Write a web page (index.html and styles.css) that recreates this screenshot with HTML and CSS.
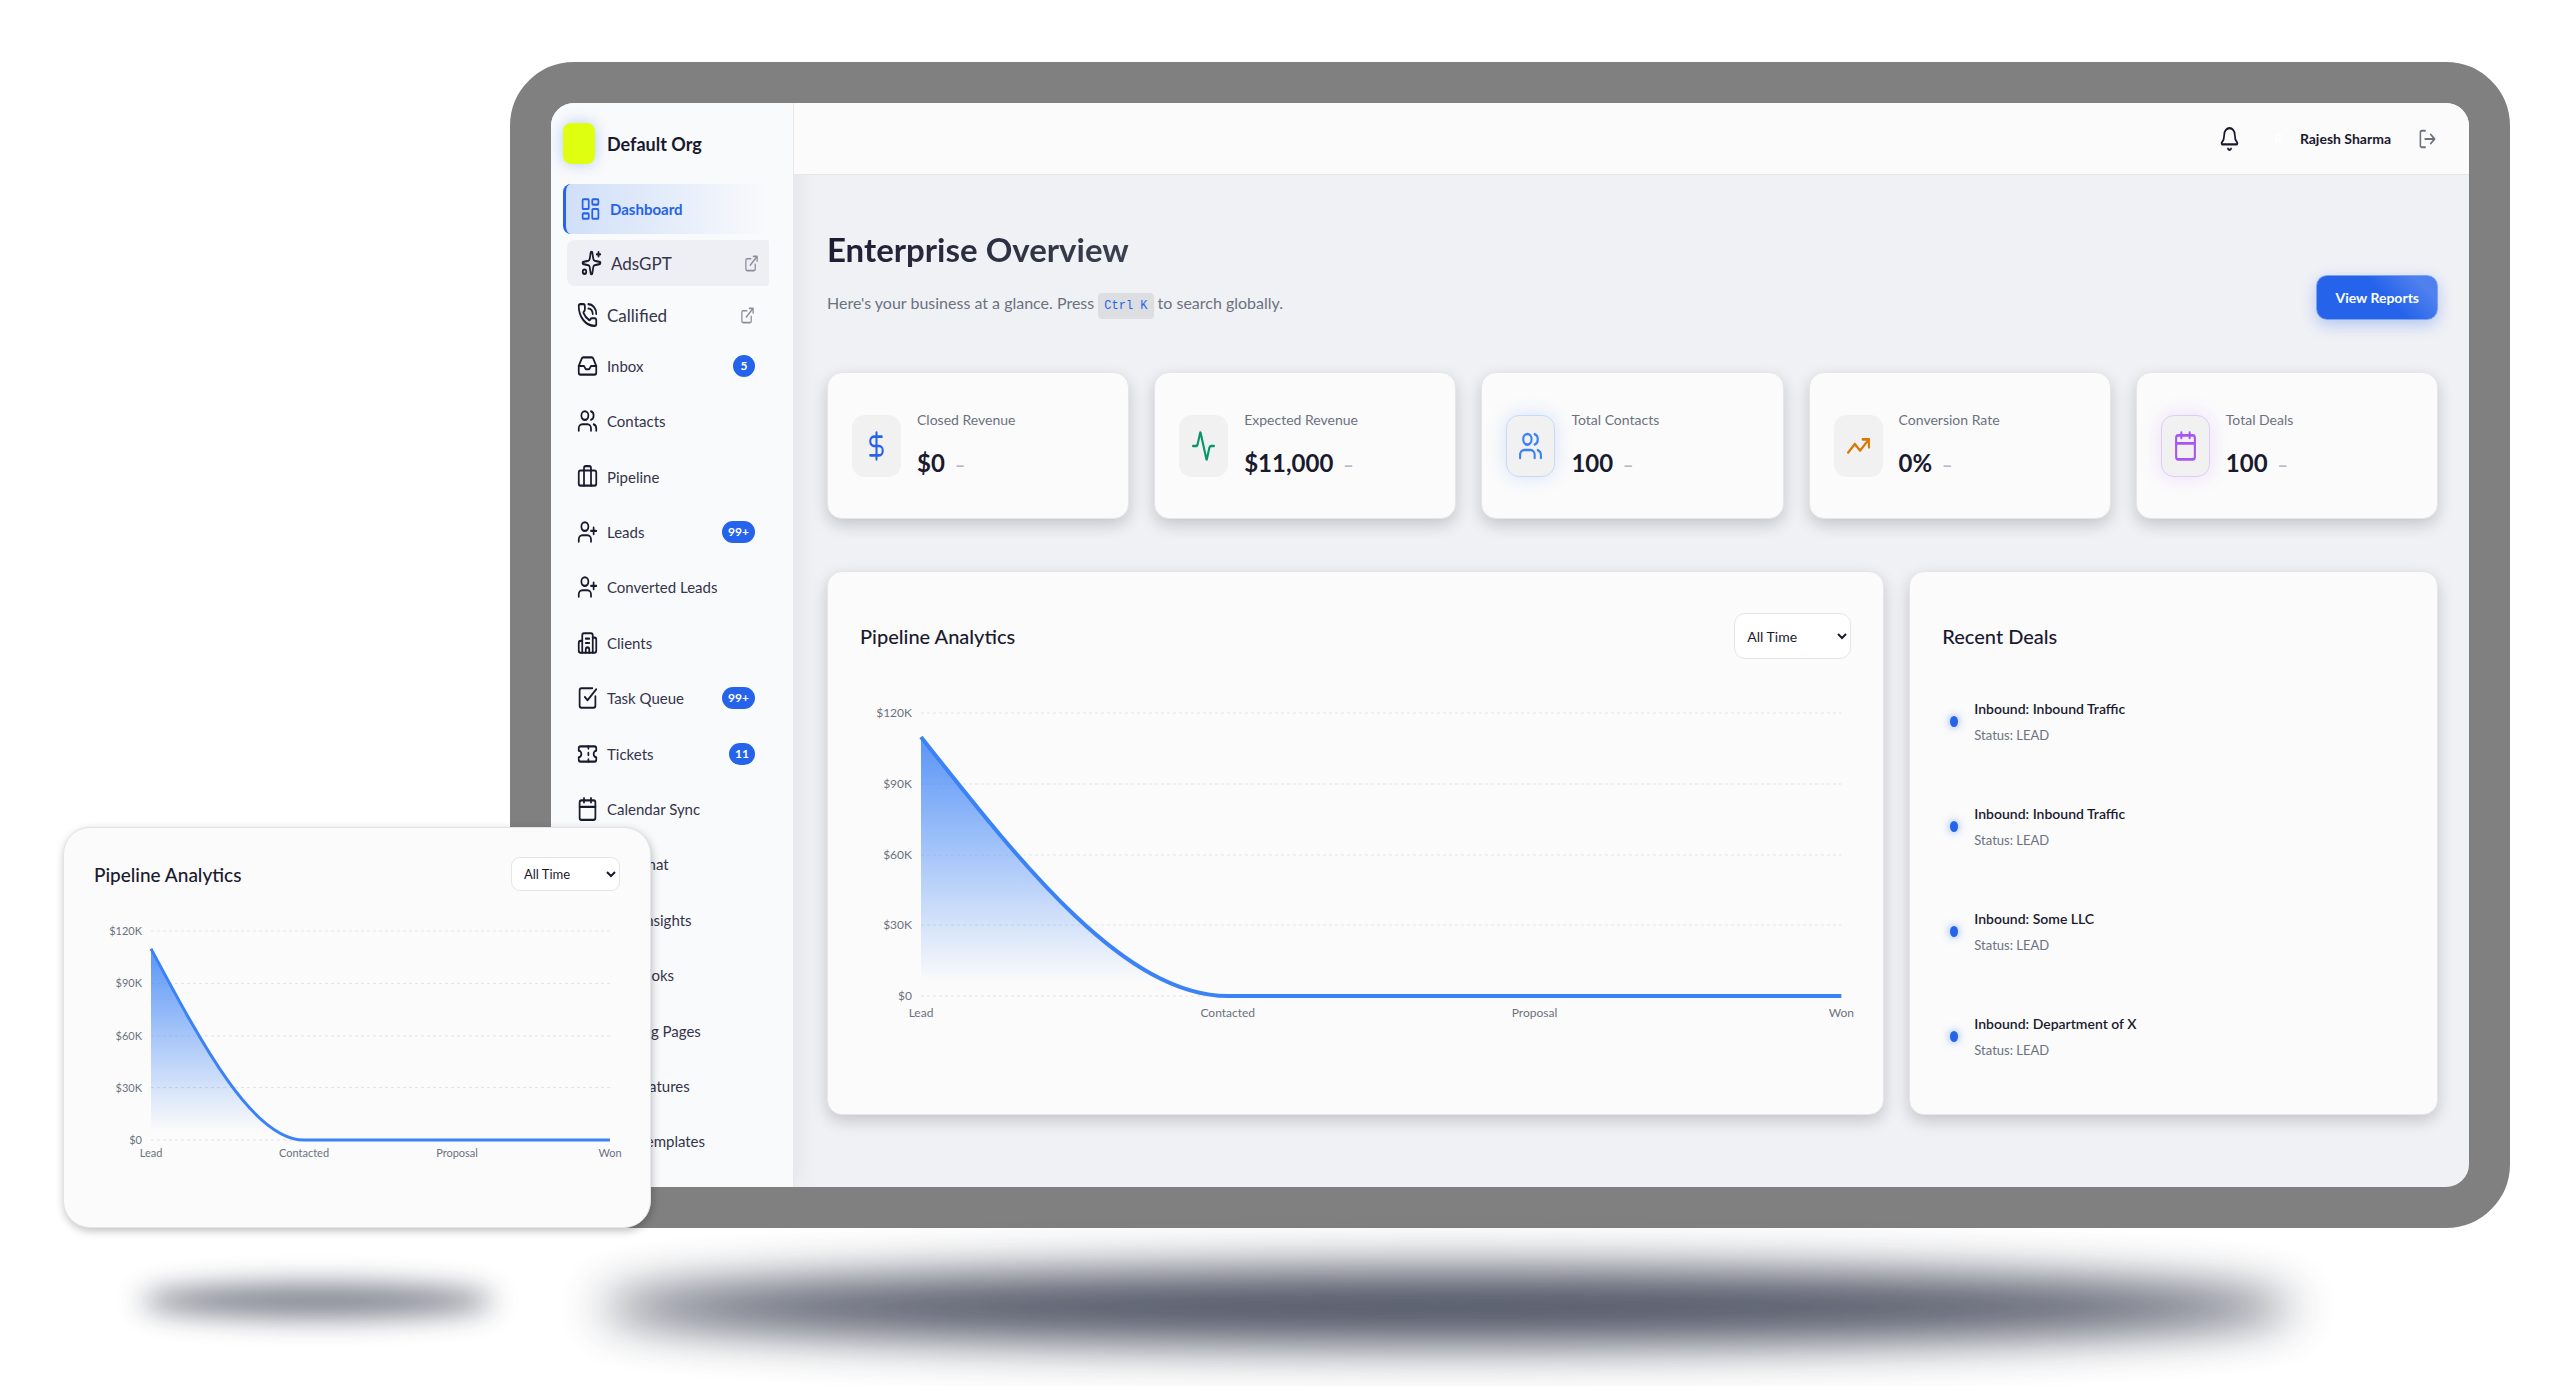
FILE: index.html
```html
<!DOCTYPE html>
<html lang="en">
<head>
    <meta charset="UTF-8">
    <meta name="viewport" content="width=device-width, initial-scale=1.0">
    <title>Enterprise Overview</title>
    <link rel="stylesheet" href="styles.css">
</head>
<body>
    <!-- shared icon shapes, 24x24 grid -->
    <svg class="icon-defs" aria-hidden="true">
        <symbol id="i-dashboard" viewBox="0 0 24 24" preserveAspectRatio="none"><rect x="3" y="3" width="7" height="9" rx="1"/><rect x="14" y="3" width="7" height="5" rx="1"/><rect x="14" y="12" width="7" height="9" rx="1"/><rect x="3" y="16" width="7" height="5" rx="1"/></symbol>
        <symbol id="i-sparkles" viewBox="0 0 24 24" preserveAspectRatio="none"><path d="M11 2.800a1 1 0 0 1 2 0l1.100 5.600a2 2 0 0 0 1.500 1.500l5.600 1.100a1 1 0 0 1 0 2l-5.600 1.100a2 2 0 0 0-1.500 1.500l-1.100 5.600a1 1 0 0 1-2 0l-1.100-5.600a2 2 0 0 0-1.500-1.500l-5.600-1.100a1 1 0 0 1 0-2l5.600-1.100a2 2 0 0 0 1.500-1.500z"/><path d="M20 2v4M22 4h-4"/><circle cx="4" cy="20" r="2"/></symbol>
        <symbol id="i-phone" viewBox="0 0 24 24" preserveAspectRatio="none"><path d="M13 2a9 9 0 0 1 9 9M13 6a5 5 0 0 1 5 5"/><path d="M13.832 16.568a1 1 0 0 0 1.213-.303l.355-.465A2 2 0 0 1 17 15h3a2 2 0 0 1 2 2v3a2 2 0 0 1-2 2A18 18 0 0 1 2 4a2 2 0 0 1 2-2h3a2 2 0 0 1 2 2v3a2 2 0 0 1-.8 1.600l-.468.351a1 1 0 0 0-.292 1.233 14 14 0 0 0 6.392 6.384"/></symbol>
        <symbol id="i-external" viewBox="0 0 24 24" preserveAspectRatio="none"><path d="M15 3h6v6M10 14 21 3M18 13v6a2 2 0 0 1-2 2H5a2 2 0 0 1-2-2V8a2 2 0 0 1 2-2h6"/></symbol>
        <symbol id="i-inbox" viewBox="0 0 24 24" preserveAspectRatio="none"><path d="M22 12h-6l-2 3h-4l-2-3H2"/><path d="M5.450 5.110 2 12v6a2 2 0 0 0 2 2h16a2 2 0 0 0 2-2v-6l-3.450-6.890A2 2 0 0 0 16.760 4H7.240a2 2 0 0 0-1.790 1.110z"/></symbol>
        <symbol id="i-users" viewBox="0 0 24 24" preserveAspectRatio="none"><path d="M16 21v-2a4 4 0 0 0-4-4H6a4 4 0 0 0-4 4v2"/><circle cx="9" cy="7" r="4"/><path d="M22 21v-2a4 4 0 0 0-3-3.870M16 3.130a4 4 0 0 1 0 7.750"/></symbol>
        <symbol id="i-case" viewBox="0 0 24 24" preserveAspectRatio="none"><path d="M16 20V4a2 2 0 0 0-2-2h-4a2 2 0 0 0-2 2v16"/><rect x="2" y="6" width="20" height="14" rx="2"/></symbol>
        <symbol id="i-user-plus" viewBox="0 0 24 24" preserveAspectRatio="none"><path d="M16 21v-2a4 4 0 0 0-4-4H6a4 4 0 0 0-4 4v2"/><circle cx="9" cy="7" r="4"/><path d="M19 8v6M22 11h-6"/></symbol>
        <symbol id="i-building" viewBox="0 0 24 24" preserveAspectRatio="none"><path d="M10 12h4M10 8h4M14 21v-3a2 2 0 0 0-4 0v3"/><path d="M6 10H4a2 2 0 0 0-2 2v7a2 2 0 0 0 2 2h16a2 2 0 0 0 2-2V9a2 2 0 0 0-2-2h-2"/><path d="M6 21V5a2 2 0 0 1 2-2h8a2 2 0 0 1 2 2v16"/></symbol>
        <symbol id="i-task" viewBox="0 0 24 24" preserveAspectRatio="none"><path d="M21 10.500V19a2 2 0 0 1-2 2H5a2 2 0 0 1-2-2V5a2 2 0 0 1 2-2h12.500"/><path d="m9 11 3 3L22 4"/></symbol>
        <symbol id="i-ticket" viewBox="0 0 24 24" preserveAspectRatio="none"><path d="M2 9a3 3 0 0 1 0 6v2a2 2 0 0 0 2 2h16a2 2 0 0 0 2-2v-2a3 3 0 0 1 0-6V7a2 2 0 0 0-2-2H4a2 2 0 0 0-2 2Z"/><path d="M13 5v2M13 17v2M13 11v2"/></symbol>
        <symbol id="i-calendar" viewBox="0 0 24 24" preserveAspectRatio="none"><path d="M8 2v4M16 2v4M3 10h18"/><rect x="3" y="4" width="18" height="18" rx="2"/></symbol>
        <symbol id="i-bell" viewBox="0 0 24 24" preserveAspectRatio="none"><path d="M10.268 21a2 2 0 0 0 3.464 0"/><path d="M3.262 15.326A1 1 0 0 0 4 17h16a1 1 0 0 0 .740-1.673C19.410 13.956 18 12.499 18 8A6 6 0 0 0 6 8c0 4.499-1.411 5.956-2.738 7.326"/></symbol>
        <symbol id="i-logout" viewBox="0 0 24 24" preserveAspectRatio="none"><path d="m16 17 5-5-5-5M21 12H9M9 21H5a2 2 0 0 1-2-2V5a2 2 0 0 1 2-2h4"/></symbol>
        <symbol id="i-dollar" viewBox="0 0 24 24" preserveAspectRatio="none"><path d="M12 2v20M17 5H9.500a3.500 3.500 0 0 0 0 7h5a3.500 3.500 0 0 1 0 7H6"/></symbol>
        <symbol id="i-activity" viewBox="0 0 24 24" preserveAspectRatio="none"><path d="M22 12h-2.480a2 2 0 0 0-1.930 1.460l-2.350 8.360a.25.25 0 0 1-.48 0L9.240 2.180a.25.25 0 0 0-.48 0l-2.350 8.360A2 2 0 0 1 4.490 12H2"/></symbol>
        <symbol id="i-trend" viewBox="0 0 24 24" preserveAspectRatio="none"><path d="M16 7h6v6"/><path d="m22 7-8.500 8.500-5-5L2 17"/></symbol>
    </svg>

    <div class="scene">
        <div class="device">
            <aside class="sidebar">
                <div class="brand">
                    <span class="brand-logo"></span>
                    <span class="brand-name">Default Org</span>
                </div>
                <nav class="nav" aria-label="Main">
                    <a href="#" class="nav-link active" aria-current="page"><svg class="icon"><use href="#i-dashboard"/></svg>Dashboard</a>
                    <a href="#" class="nav-link product hover"><svg class="icon"><use href="#i-sparkles"/></svg>AdsGPT<svg class="icon ext"><use href="#i-external"/></svg></a>
                    <a href="#" class="nav-link product"><svg class="icon"><use href="#i-phone"/></svg>Callified<svg class="icon ext"><use href="#i-external"/></svg></a>
                    <ul class="nav-list">
                        <li><a href="#" class="nav-link"><svg class="icon"><use href="#i-inbox"/></svg>Inbox<span class="badge">5</span></a></li>
                        <li><a href="#" class="nav-link"><svg class="icon"><use href="#i-users"/></svg>Contacts</a></li>
                        <li><a href="#" class="nav-link"><svg class="icon"><use href="#i-case"/></svg>Pipeline</a></li>
                        <li><a href="#" class="nav-link"><svg class="icon"><use href="#i-user-plus"/></svg>Leads<span class="badge">99+</span></a></li>
                        <li><a href="#" class="nav-link"><svg class="icon"><use href="#i-user-plus"/></svg>Converted Leads</a></li>
                        <li><a href="#" class="nav-link"><svg class="icon"><use href="#i-building"/></svg>Clients</a></li>
                        <li><a href="#" class="nav-link"><svg class="icon"><use href="#i-task"/></svg>Task Queue<span class="badge">99+</span></a></li>
                        <li><a href="#" class="nav-link"><svg class="icon"><use href="#i-ticket"/></svg>Tickets<span class="badge">11</span></a></li>
                        <li><a href="#" class="nav-link"><svg class="icon"><use href="#i-calendar"/></svg>Calendar Sync</a></li>
                        <li><a href="#" class="nav-link"><svg class="icon"></svg>Live Chat</a></li>
                        <li><a href="#" class="nav-link"><svg class="icon"></svg>Deal Insights</a></li>
                        <li><a href="#" class="nav-link"><svg class="icon"></svg>Playbooks</a></li>
                        <li><a href="#" class="nav-link"><svg class="icon"></svg>Landing Pages</a></li>
                        <li><a href="#" class="nav-link"><svg class="icon"></svg>E-Signatures</a></li>
                        <li><a href="#" class="nav-link"><svg class="icon"></svg>Mail Templates</a></li>
                    </ul>
                </nav>
            </aside>

            <div class="content">
                <header class="topbar">
                    <button type="button" class="icon-button" aria-label="Notifications"><svg class="icon"><use href="#i-bell"/></svg></button>
                    <div class="user"><span class="avatar">R</span>Rajesh Sharma</div>
                    <button type="button" class="icon-button logout" aria-label="Log out"><svg class="icon"><use href="#i-logout"/></svg></button>
                </header>

                <main class="main">
                    <div class="page-head">
                        <div>
                            <h1>Enterprise Overview</h1>
                            <p class="lead">Here's your business at a glance. Press <kbd>Ctrl K</kbd> to search globally.</p>
                        </div>
                        <button type="button" class="btn-primary">View Reports</button>
                    </div>

                    <section class="stats">
                        <div class="card stat">
                            <div class="stat-icon blue"><svg class="icon"><use href="#i-dollar"/></svg></div>
                            <div>
                                <div class="stat-label">Closed Revenue</div>
                                <div class="stat-value">$0 <span>–</span></div>
                            </div>
                        </div>
                        <div class="card stat">
                            <div class="stat-icon green"><svg class="icon"><use href="#i-activity"/></svg></div>
                            <div>
                                <div class="stat-label">Expected Revenue</div>
                                <div class="stat-value">$11,000 <span>–</span></div>
                            </div>
                        </div>
                        <div class="card stat">
                            <div class="stat-icon sky"><svg class="icon"><use href="#i-users"/></svg></div>
                            <div>
                                <div class="stat-label">Total Contacts</div>
                                <div class="stat-value">100 <span>–</span></div>
                            </div>
                        </div>
                        <div class="card stat">
                            <div class="stat-icon orange"><svg class="icon"><use href="#i-trend"/></svg></div>
                            <div>
                                <div class="stat-label">Conversion Rate</div>
                                <div class="stat-value">0% <span>–</span></div>
                            </div>
                        </div>
                        <div class="card stat">
                            <div class="stat-icon purple"><svg class="icon"><use href="#i-calendar"/></svg></div>
                            <div>
                                <div class="stat-label">Total Deals</div>
                                <div class="stat-value">100 <span>–</span></div>
                            </div>
                        </div>
                    </section>

                    <section class="panels">
                        <div class="card panel">
                            <div class="panel-head">
                                <h2>Pipeline Analytics</h2>
                                <div class="select">
                                    <select aria-label="Period"><option>All Time</option></select>
                                    <svg viewBox="0 0 10 8" aria-hidden="true"><path d="M1 2l4 4 4-4"/></svg>
                                </div>
                            </div>
                            <div class="chart">
                                <div class="y-axis"><span>$120K</span><span>$90K</span><span>$60K</span><span>$30K</span><span>$0</span></div>
                                <svg class="plot" viewBox="0 0 920 283" preserveAspectRatio="none" role="img" aria-label="Pipeline value by stage">
                                    <defs>
                                        <linearGradient id="area" x1="0" y1="0" x2="0" y2="1">
                                            <stop offset="5%" stop-color="#3b82f6" stop-opacity="0.8"/>
                                            <stop offset="95%" stop-color="#3b82f6" stop-opacity="0"/>
                                        </linearGradient>
                                    </defs>
                                    <path class="grid" d="M0 0H920M0 71H920M0 142H920M0 212H920M0 283H920"/>
                                    <path fill="url(#area)" d="M0 24C102 153 204 283 307 283H0Z"/>
                                    <path class="line" d="M0 24C102 153 204 283 307 283H920"/>
                                </svg>
                                <div class="x-axis"><span>Lead</span><span>Contacted</span><span>Proposal</span><span>Won</span></div>
                            </div>
                        </div>

                        <div class="card panel">
                            <div class="panel-head">
                                <h2>Recent Deals</h2>
                            </div>
                            <ul class="deals">
                                <li><span class="dot"></span><div><div class="deal-title">Inbound: Inbound Traffic</div><div class="deal-status">Status: LEAD</div></div></li>
                                <li><span class="dot"></span><div><div class="deal-title">Inbound: Inbound Traffic</div><div class="deal-status">Status: LEAD</div></div></li>
                                <li><span class="dot"></span><div><div class="deal-title">Inbound: Some LLC</div><div class="deal-status">Status: LEAD</div></div></li>
                                <li><span class="dot"></span><div><div class="deal-title">Inbound: Department of X</div><div class="deal-status">Status: LEAD</div></div></li>
                            </ul>
                        </div>
                    </section>
                </main>
            </div>
        </div>

        <!-- floating chart card over the device corner -->
        <div class="float-card">
            <div class="panel-head">
                <h2>Pipeline Analytics</h2>
                <div class="select">
                    <select aria-label="Period"><option>All Time</option></select>
                    <svg viewBox="0 0 10 8" aria-hidden="true"><path d="M1 2l4 4 4-4"/></svg>
                </div>
            </div>
            <div class="chart">
                <div class="y-axis"><span>$120K</span><span>$90K</span><span>$60K</span><span>$30K</span><span>$0</span></div>
                <svg class="plot" viewBox="0 0 920 283" preserveAspectRatio="none" role="img" aria-label="Pipeline value by stage">
                    <path class="grid" d="M0 0H920M0 71H920M0 142H920M0 212H920M0 283H920"/>
                    <path fill="url(#area)" d="M0 24C102 153 204 283 307 283H0Z"/>
                    <path class="line" d="M0 24C102 153 204 283 307 283H920"/>
                </svg>
                <div class="x-axis"><span>Lead</span><span>Contacted</span><span>Proposal</span><span>Won</span></div>
            </div>
        </div>
    </div>

    <div class="ground">
        <div class="ground-shadow small"></div>
        <div class="ground-shadow large"></div>
    </div>
</body>
</html>
```
FILE: styles.css
```css
* {
    box-sizing: border-box;
}
body {
    margin: 0;
    background: #fff;
    color: #1a1a2e;
    font-family: Lato, sans-serif;
    font-size: 15px;
    overflow: hidden;
}
h1, h2, p, ul {
    margin: 0;
    padding: 0;
}
ul {
    list-style: none;
}
button, select {
    font-family: inherit;
    color: inherit;
}
.icon-defs {
    position: absolute;
    width: 0;
    height: 0;
}
.icon {
    width: 21px;
    height: 26px;
    flex: none;
    fill: none;
    stroke: currentColor;
    stroke-width: 2;
    stroke-linecap: round;
    stroke-linejoin: round;
}

.scene {
    position: relative;
    padding: 62px 50px 0 510px;
}
.device {
    display: flex;
    border: 41px solid #808080;
    border-radius: 64px;
    background: #f0f1f5;
    overflow: hidden;
}

/* Sidebar */
.sidebar {
    width: 243px;
    flex: none;
    display: flex;
    flex-direction: column;
    background: #f9fafc;
    border-right: 1px solid #e8e9ed;
    box-shadow: 4px 0 24px rgba(0, 0, 0, 0.06);
    padding: 20px 24px 18px 12px;
}
.brand {
    display: flex;
    align-items: center;
    gap: 12px;
    margin-bottom: 20px;
}
.brand-logo {
    width: 32px;
    height: 41px;
    border-radius: 8px;
    background: #dfff11;
    box-shadow: 0 0 15px rgba(37, 99, 235, 0.3);
}
.brand-name {
    font-size: 18px;
    font-weight: 700;
}
.nav {
    flex: 1;
    display: flex;
    flex-direction: column;
}
.nav-list {
    flex: 1;
    display: flex;
    flex-direction: column;
}
.nav-list li {
    flex: 1;
    display: flex;
    align-items: center;
}
.nav-link {
    width: 100%;
    display: flex;
    align-items: center;
    gap: 9px;
    padding: 0 14px;
    color: #34344a;
    text-decoration: none;
}
.nav-link .icon {
    color: #1a1a2e;
}
.nav-link.active {
    height: 50px;
    border-left: 3px solid #2563eb;
    border-radius: 8px 0 0 8px;
    background: linear-gradient(90deg, #d0dff8, #f9fafc);
    color: #2563eb;
    font-weight: 700;
}
.nav-link.active .icon {
    color: #2563eb;
}
.nav-link.product {
    height: 46px;
    margin-top: 6px;
    font-size: 17px;
}
.nav-link.hover {
    width: auto;
    margin-left: 4px;
    padding-right: 10px;
    border-radius: 8px 2px 2px 8px;
    background: #eeeff5;
}
.nav-link .ext {
    width: 15px;
    height: 19px;
    margin-left: auto;
    color: #8d8d99;
}
.badge {
    margin-left: auto;
    min-width: 22px;
    padding: 0 6px;
    border-radius: 11px;
    background: #2563eb;
    color: #fff;
    font-size: 12px;
    font-weight: 700;
    line-height: 22px;
    text-align: center;
}

/* Top bar */
.content {
    flex: 1;
    min-width: 0;
}
.topbar {
    height: 72px;
    display: flex;
    align-items: center;
    justify-content: flex-end;
    padding: 0 32px;
    background: #fbfbfb;
    border-bottom: 1px solid #e6e6e9;
}
.icon-button {
    display: flex;
    padding: 0;
    border: 0;
    background: none;
    cursor: pointer;
}
.icon-button.logout {
    margin-left: 27px;
    color: #6b7280;
}
.logout .icon {
    width: 19px;
    height: 22px;
}
.user {
    display: flex;
    align-items: center;
    margin-left: 34px;
    font-size: 14px;
    font-weight: 700;
}
.avatar {
    width: 26px;
    color: #fff;
}

/* Page */
.main {
    padding: 49px 31px 72px 33px;
}
.page-head {
    display: flex;
    align-items: flex-end;
    justify-content: space-between;
    margin-bottom: 52px;
}
h1 {
    font-size: 33px;
    line-height: 50px;
    font-weight: 700;
    background: linear-gradient(135deg, #1a1a2e, #4b5563);
    -webkit-background-clip: text;
    background-clip: text;
    color: transparent;
}
.lead {
    margin-top: 15px;
    color: #6b7280;
    font-size: 16px;
    line-height: 28px;
}
kbd {
    padding: 6px;
    border-radius: 4px;
    background: #dddee2;
    color: #2563eb;
    font-family: "Liberation Mono", monospace;
    font-size: 12px;
}
.btn-primary {
    height: 45px;
    padding: 0 18px;
    border: 1px solid #7da2f2;
    border-radius: 11px;
    background: linear-gradient(45deg, #2563eb 55%, #4f80ee 85%);
    color: #fff;
    font-size: 14px;
    font-weight: 700;
    box-shadow: 0 5px 15px rgba(37, 99, 235, 0.3);
    cursor: pointer;
}

.card {
    background: #fbfbfb;
    border: 1px solid #e6e6e8;
    border-radius: 15px;
    box-shadow: 0 6px 16px rgba(0, 0, 0, 0.18);
}
.stats {
    display: grid;
    grid-template-columns: repeat(5, 1fr);
    gap: 25px;
    margin-bottom: 52px;
}
.stat {
    height: 147px;
    display: flex;
    align-items: center;
    gap: 16px;
    padding: 0 24px;
}
.stat-icon {
    width: 49px;
    height: 62px;
    display: flex;
    align-items: center;
    justify-content: center;
    border: 1px solid transparent;
    border-radius: 13px;
    background: #f1f1f2;
}
.stat-icon .icon {
    width: 25px;
    height: 32px;
}
.blue {
    color: #2563eb;
}
.green {
    color: #059669;
}
.sky {
    color: #3b82f6;
    border-color: #c9daf8;
    box-shadow: 0 0 20px rgba(59, 130, 246, 0.2);
}
.orange {
    color: #d97706;
}
.purple {
    color: #a855f7;
    border-color: #e0cdf5;
    box-shadow: 0 0 20px rgba(168, 85, 247, 0.18);
}
.stat-label {
    color: #6b7280;
    font-size: 14px;
    line-height: 22px;
}
.stat-value {
    margin-top: 14px;
    font-size: 24px;
    line-height: 36px;
    font-weight: 700;
}
.stat-value span {
    margin-left: 4px;
    color: #b9bac6;
    font-size: 18px;
}

.panels {
    display: grid;
    grid-template-columns: 2fr 1fr;
    gap: 25px;
}
.panel {
    padding: 41px 32px 25px;
}
.panel-head {
    display: flex;
    align-items: center;
    justify-content: space-between;
    min-height: 46px;
}
h2 {
    font-size: 20px;
    font-weight: 500;
}
.select {
    position: relative;
    width: 117px;
}
.select select {
    width: 100%;
    height: 46px;
    padding: 0 12px;
    appearance: none;
    border: 1px solid #e6e6ea;
    border-radius: 11px;
    background: #fff;
    font-size: 14px;
}
.select svg {
    position: absolute;
    right: 4px;
    top: 50%;
    width: 10px;
    height: 8px;
    margin-top: -4px;
    fill: none;
    stroke: #1a1a2e;
    stroke-width: 2;
    pointer-events: none;
}

/* Chart */
.chart {
    display: grid;
    grid-template-columns: 52px 1fr;
    column-gap: 9px;
    margin-top: 54px;
    padding-right: 10px;
    color: #6b7280;
    font-size: 12px;
    line-height: 20px;
}
.y-axis {
    display: flex;
    flex-direction: column;
    justify-content: space-between;
    margin: -10px 0;
    text-align: right;
}
.plot {
    display: block;
    width: 100%;
    height: 283px;
    overflow: visible;
}
.grid {
    fill: none;
    stroke: #e2e3e6;
    stroke-width: 1;
    stroke-dasharray: 3 3;
    vector-effect: non-scaling-stroke;
}
.line {
    fill: none;
    stroke: #3b82f6;
    stroke-width: 4;
    vector-effect: non-scaling-stroke;
}
.x-axis {
    grid-column: 2;
    display: flex;
    justify-content: space-between;
    margin-top: 7px;
}
/* zero-width slots centre each label on its data point */
.x-axis span {
    width: 0;
    display: flex;
    justify-content: center;
}

/* Deals */
.deals {
    margin-top: 10px;
}
.deals li {
    display: flex;
    align-items: center;
    gap: 16px;
    height: 105px;
    padding-left: 8px;
}
.dot {
    width: 8px;
    height: 11px;
    border-radius: 50%;
    background: #2563eb;
    box-shadow: 0 0 8px rgba(37, 99, 235, 0.6);
}
.deal-title {
    font-size: 14px;
    font-weight: 600;
    line-height: 24px;
}
.deal-status {
    margin-top: 2px;
    color: #6b7280;
    font-size: 13px;
    line-height: 24px;
}

/* Floating card */
.float-card {
    position: absolute;
    left: 63px;
    bottom: 0;
    width: 588px;
    padding: 29px 30px 66px;
    border: 1px solid #e4e4e6;
    border-radius: 27px;
    background: #fbfbfb;
    box-shadow: 1px 3px 8px rgba(0, 0, 0, 0.25);
}
.float-card .panel-head {
    min-height: 34px;
}
.float-card h2 {
    font-size: 19px;
}
.float-card .select {
    width: 109px;
}
.float-card select {
    height: 34px;
    font-size: 13px;
    border-radius: 9px;
}
.float-card .chart {
    grid-template-columns: 48px 1fr;
    margin-top: 40px;
    font-size: 11px;
    line-height: 16px;
}
.float-card .y-axis {
    margin: -8px 0;
}
.float-card .plot {
    height: 209px;
}
.float-card .line {
    stroke-width: 3;
}
.float-card .x-axis {
    margin-top: 5px;
}

/* Soft shadows on the ground */
.ground {
    display: flex;
    align-items: center;
    height: 158px;
    padding: 0 265px 0 140px;
}
.ground-shadow {
    border-radius: 50%;
    background: #1e2438;
}
.ground-shadow.small {
    width: 355px;
    height: 32px;
    margin-bottom: 12px;
    opacity: 0.6;
    filter: blur(14px);
}
.ground-shadow.large {
    flex: 1;
    height: 76px;
    margin-left: 105px;
    opacity: 0.78;
    filter: blur(24px);
}
```
